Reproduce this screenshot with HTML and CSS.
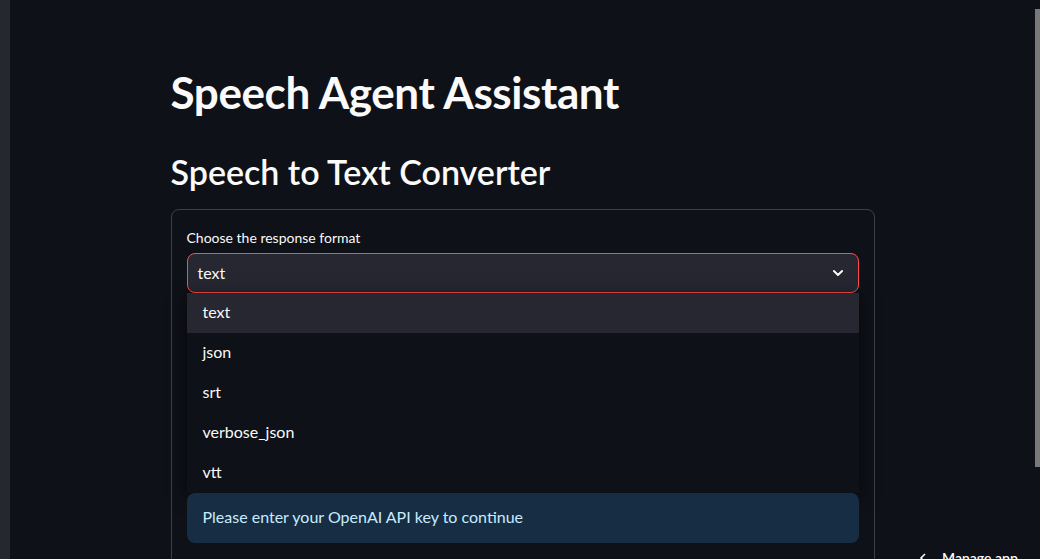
FILE: index.html
```html
<!DOCTYPE html>
<html lang="en">
<head>
<meta charset="utf-8">
<title>Speech Agent Assistant</title>
<link rel="stylesheet" href="styles.css">
</head>
<body>
<div class="app">
  <aside class="sidebar"></aside>
  <main class="main">
    <div class="block">
      <h1 class="title">Speech Agent Assistant</h1>
      <h2 class="subtitle">Speech to Text Converter</h2>
      <section class="form">
        <label class="label">Choose the response format</label>
        <div class="select">
          <span class="select-value">text</span>
          <svg class="chev" width="14" height="14" viewBox="0 0 24 24"><path d="M5 8.5l7 7 7-7" fill="none" stroke="#fafafa" stroke-width="3.4" stroke-linecap="round" stroke-linejoin="round"/></svg>
        </div>
        <ul class="menu">
          <li class="opt active">text</li>
          <li class="opt">json</li>
          <li class="opt">srt</li>
          <li class="opt">verbose_json</li>
          <li class="opt">vtt</li>
        </ul>
        <div class="info">Please enter your OpenAI API key to continue</div>
      </section>
    </div>
  </main>
  <div class="scrolltrack"><div class="thumb"></div></div>
</div>
<div class="manage">
  <svg width="10" height="10" viewBox="0 0 10 10"><path d="M7 1L3 5l4 4" fill="none" stroke="#fafafa" stroke-width="1.6"/></svg>
  <span>Manage app</span>
</div>
</body>
</html>
```

FILE: styles.css
```css
* { box-sizing: border-box; }
html, body { margin: 0; padding: 0; height: 100%; overflow: hidden; }
body {
  background: #0e1117;
  color: #fafafa;
  font-family: "Lato", "Noto Sans", sans-serif;
}
.app { display: flex; height: 559px; }
.sidebar { width: 10px; flex: none; background: #262730; }
.main { flex: 1; display: flex; justify-content: center; }
.block { width: 704px; padding-top: 66px; }
.title {
  margin: 0;
  font-size: 44px;
  font-weight: 700;
  line-height: 52px;
  letter-spacing: -0.4px;
}
.subtitle {
  margin: 32px 0 0;
  font-size: 34px;
  font-weight: 600;
  line-height: 44px;
}
.form {
  margin-top: 15px;
  border: 1px solid rgba(250,250,250,0.2);
  border-radius: 8px;
  padding: 16px 15px 15px;
  height: 360px;
}
.label {
  display: block;
  font-size: 14px;
  line-height: 22px;
  margin: 1px 0 4px;
}
.select {
  height: 40px;
  background: #262730;
  border: 1px solid #ff4b4b;
  border-radius: 8px;
  display: flex;
  align-items: center;
  justify-content: space-between;
  padding: 0 13px 2px 10px;
  font-size: 16px;
}
.chev { display: block; margin-top: 2px; }
.menu {
  list-style: none;
  margin: 0;
  padding: 0;
  background: #0e1117;
  box-shadow: 0 4px 16px rgba(0,0,0,0.6);
}
.opt {
  height: 40px;
  line-height: 37px;
  padding: 0 16px 3px;
  font-size: 16px;
}
.opt.active { background: #262730; }
.info {
  height: 50px;
  background: #172d43;
  color: #c7ebff;
  border-radius: 8px;
  padding: 0 16px 3px;
  display: flex;
  align-items: center;
  font-size: 16px;
}
.scrolltrack { width: 5px; flex: none; padding-top: 9px; }
.thumb { height: 458px; background: #787878; }
.manage {
  position: absolute;
  left: 918px;
  top: 549px;
  display: flex;
  align-items: center;
  gap: 14px;
  font-size: 14px;
  font-weight: 600;
  color: #fafafa;
}
```
